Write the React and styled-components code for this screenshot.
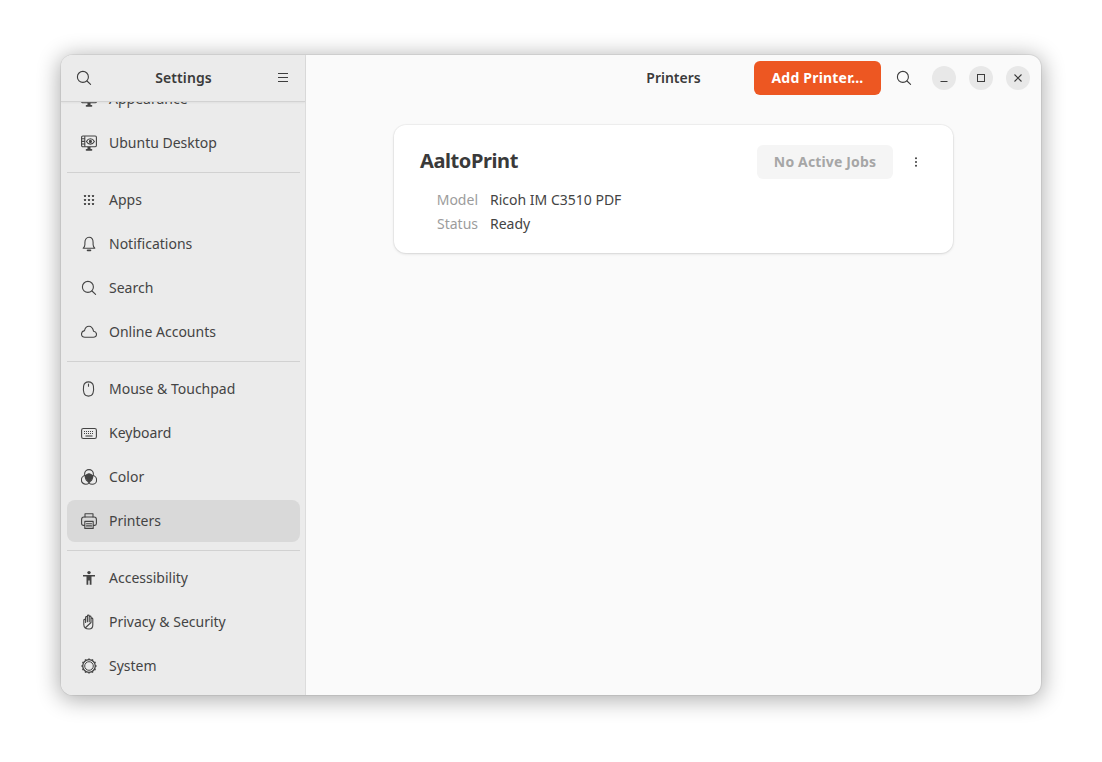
import React from "react";
import styled, { createGlobalStyle } from "styled-components";

const Global = createGlobalStyle`
  html, body { margin: 0; padding: 0; background: #fff; }
  body { font-family: "Noto Sans", "Open Sans", sans-serif; color: #3d3d3d; }
`;

const Page = styled.div`
  width: 1102px;
  height: 762px;
  padding: 55px 61px 67px;
  box-sizing: border-box;
  overflow: hidden;
`;
const Win = styled.div`
  width: 980px;
  height: 640px;
  display: flex;
  border-radius: 12px;
  overflow: hidden;
  background: #fafafa;
  box-shadow: 0 0 0 1px rgba(0,0,0,.06), 0 3px 22px 2px rgba(0,0,0,.32);
`;
const Sidebar = styled.aside`
  width: 244px;
  flex: none;
  display: flex;
  flex-direction: column;
  background: #ebebeb;
  border-right: 1px solid #dcdcdc;
`;
const SideHeader = styled.header`
  height: 46px;
  flex: none;
  display: flex;
  align-items: center;
  justify-content: space-between;
  padding: 0 14px 0 15px;
  background: #ebebeb;
  border-bottom: 1px solid #d2d2d2;
  box-shadow: 0 1px 2px rgba(0,0,0,.05);
  position: relative;
  z-index: 1;
`;
const SideTitle = styled.h1`
  margin: 0;
  padding-bottom: 2px;
  font-size: 14px;
  font-weight: 600;
  letter-spacing: 0.1px;
  color: #3a3a3a;
`;
const Scroll = styled.nav`
  flex: 1;
  overflow: hidden;
  padding: 0 5px 0 6px;
`;
const Clip = styled.div`
  margin-top: -24px;
  display: flex;
  flex-direction: column;
  gap: 2px;
`;
const Row = styled.a`
  height: 42px;
  flex: none;
  display: flex;
  align-items: center;
  gap: 12px;
  padding-left: 14px;
  border-radius: 8px;
  font-size: 14px;
  color: #444;
  background: ${(p) => (p.$active ? "#d9d9d9" : "transparent")};
  svg { flex: none; }
`;
const RowLabel = styled.span`
  padding-bottom: 2px;
`;
const Sep = styled.hr`
  border: 0;
  height: 1px;
  background: #d1d1d1;
  margin: 6px 0 4px;
`;
const Main = styled.main`
  flex: 1;
  min-width: 0;
  display: flex;
  flex-direction: column;
`;
const MainHeader = styled.header`
  height: 46px;
  flex: none;
  display: grid;
  grid-template-columns: 1fr auto 1fr;
  align-items: center;
  padding: 0 11px;
`;
const MainTitle = styled.h2`
  grid-column: 2;
  margin: 0;
  padding-bottom: 2px;
  font-size: 14px;
  font-weight: 600;
  color: #3a3a3a;
`;
const HeaderEnd = styled.div`
  grid-column: 3;
  display: flex;
  align-items: center;
  justify-content: flex-end;
`;
const AddButton = styled.button`
  width: 127px;
  height: 34px;
  border: 0;
  border-radius: 6px;
  background: #ed5722;
  color: #fff;
  font: 700 14px "Noto Sans", sans-serif;
  letter-spacing: 0.2px;
  padding: 0 0 2px;
  margin-right: 14px;
`;
const SearchSlot = styled.span`
  display: flex;
  width: 18px;
  justify-content: center;
  margin-right: 19px;
`;
const WinButton = styled.button`
  width: 24px;
  height: 24px;
  padding: 0;
  border: 0;
  border-radius: 50%;
  background: #e8e8e8;
  color: #3d3d3d;
  display: flex;
  align-items: center;
  justify-content: center;
  margin-left: ${(p) => (p.$first ? 0 : 13)}px;
`;
const Content = styled.div`
  flex: 1;
  padding-top: 24px;
  display: flex;
  justify-content: center;
  align-items: flex-start;
`;
const Card = styled.section`
  width: 559px;
  height: 128px;
  box-sizing: border-box;
  background: #fff;
  border-radius: 12px;
  box-shadow: 0 0 0 1px rgba(0,0,0,.035), 0 1px 3px rgba(0,0,0,.12);
  padding: 20px 26px 0;
`;
const CardTop = styled.div`
  display: flex;
  align-items: center;
  height: 34px;
`;
const PrinterName = styled.h3`
  flex: 1;
  margin: 0;
  padding-bottom: 4px;
  font-size: 20px;
  font-weight: 700;
  letter-spacing: -0.4px;
  color: #3a3a3a;
`;
const JobsButton = styled.button`
  width: 136px;
  height: 34px;
  border: 0;
  border-radius: 6px;
  background: #f5f5f5;
  color: #a6a6a6;
  font: 700 14px "Noto Sans", sans-serif;
  letter-spacing: 0.15px;
  padding: 0 0 2px;
  margin-right: 15px;
`;
const Kebab = styled.span`
  display: flex;
  width: 16px;
  justify-content: center;
  margin-right: 3px;
`;
const Details = styled.dl`
  margin: 9px 0 0;
  display: grid;
  grid-template-columns: 58px auto;
  column-gap: 12px;
  font-size: 14px;
  line-height: 24px;
  dt { color: #9c9c9c; text-align: right; }
  dd { margin: 0; color: #444; }
`;

const I = ({ children, size = 16, sw = 1.1 }) => (
  <svg width={size} height={size} viewBox="0 0 16 16" fill="none" stroke="currentColor" strokeWidth={sw} strokeLinecap="round" strokeLinejoin="round">
    {children}
  </svg>
);
const SearchIcon = () => (
  <I><circle cx="6.900" cy="6.900" r="5.500" /><path d="M11 11l3.600 3.400" /></I>
);
const Monitor = () => (
  <I><rect x="0.600" y="1" width="14.800" height="10.800" rx="1.200" /><path d="M5.500 14.900h5" strokeWidth="1.600" /><path d="M7 12v2.500h2v-2.500" fill="currentColor" /></I>
);
const Desktop = () => (
  <I>
    <rect x="0.600" y="1" width="14.800" height="10.800" rx="1.200" />
    <path d="M3.800 1.500v9.800M1 3.800h2.800M1 6.400h2.800M1 9h2.800" />
    <path d="M5.400 6.400c1-1.800 2.400-2.700 4-2.700s3 .9 4 2.700c-1 1.800-2.400 2.700-4 2.700s-3-.9-4-2.700z" />
    <circle cx="9.400" cy="6.400" r="1" fill="currentColor" />
    <path d="M5.500 14.900h5" strokeWidth="1.600" /><path d="M7 12v2.500h2v-2.500" fill="currentColor" />
  </I>
);
const Apps = () => (
  <svg width="16" height="16" viewBox="0 0 16 16" fill="currentColor">
    {[3, 7, 11].flatMap((y) => [3, 7, 11].map((x) => <rect key={x + "-" + y} x={x} y={y} width="2" height="2" rx="0.400" />))}
  </svg>
);
const Bell = () => (
  <I><path d="M2.200 12.200c1.200-1 1.700-2 1.700-3.700V6.400C3.900 3.400 5.600 1.300 8 1.300s4.100 2.100 4.100 5.100v2.100c0 1.700.5 2.700 1.700 3.700z" /><path d="M6.600 14.300h2.800" strokeWidth="1.800" /></I>
);
const Cloud = () => (
  <I><path d="M4 13.200h8.300c1.900 0 3.200-1.200 3.200-2.900 0-1.600-1.200-2.800-2.900-3C11.900 4.200 10.200 2.200 8 2.200c-2.300 0-4 1.900-4.500 4.400C1.600 7 .5 8.400.5 10c0 1.800 1.500 3.200 3.500 3.200z" /></I>
);
const Mouse = () => (
  <I><path d="M7.500 .9c3 0 4.400 1.500 4.900 4.100.4 2.600.3 5-.4 7.200-.6 1.800-2.200 2.900-4.500 2.900s-3.900-1.100-4.500-2.900c-.7-2.200-.8-4.600-.4-7.200C3.100 2.400 4.500.9 7.500.9z" /><path d="M7.500 3v2.200" /></I>
);
const Keyboard = () => (
  <svg width="16" height="16" viewBox="0 0 16 16" fill="none" stroke="currentColor" strokeWidth="1.100">
    <rect x="0.600" y="3.500" width="14.800" height="10" rx="1.800" />
    <path d="M3 6.500h10M3 8.500h10" strokeDasharray="1 1" />
    <path d="M4.500 11h7" />
  </svg>
);
const Color = () => (
  <svg width="16" height="16" viewBox="0 0 16 16" fill="none" stroke="currentColor" strokeWidth="1.100">
    <path d="M8 4.800C6.300 5 4.600 6.200 4.300 8.300c.5 2 2 4.200 3.700 4.200s3.200-2.200 3.700-4.200C11.400 6.200 9.700 5 8 4.800z" fill="currentColor" />
    <circle cx="8" cy="5" r="4.400" />
    <circle cx="4.800" cy="10.900" r="4.400" />
    <circle cx="11.200" cy="10.900" r="4.400" />
  </svg>
);
const Printer = () => (
  <I>
    <path d="M4 4V.7h8V4" />
    <path d="M3.600 12.400H2.400C1.300 12.400.6 11.700.6 10.600V6.400C.6 5 1.500 4 2.900 4h10.200c1.400 0 2.300 1 2.300 2.400v4.200c0 1.100-.7 1.800-1.800 1.800h-1.200" />
    <rect x="3.800" y="8.400" width="8.400" height="7" />
    <path d="M5.500 10.700h5M5.500 12.900h5" />
  </I>
);
const Person = () => (
  <svg width="16" height="16" viewBox="0 0 16 16" fill="currentColor">
    <circle cx="8" cy="2.600" r="1.700" />
    <path d="M2 5h12v1.500h-3.500V14.800H8.700v-4.300H7.300v4.300H5.500V6.500H2z" />
  </svg>
);
const Hand = () => (
  <I><path d="M4.200 14C3.300 13 2.800 11.800 2.800 10.400V6.300a.9.900 0 0 1 1.800 0V8.500M4.600 8.500V3.400a.9.900 0 0 1 1.800 0V7.800M6.400 7.800V2a.9.900 0 0 1 1.800 0v5.800M8.200 7.800V3a.9.900 0 0 1 1.800 0v4.800M10 8.500V5a.9.900 0 0 1 1.800 0v6c0 2.700-1.500 4-3.700 4-1.500 0-2.900-.2-3.900-1z" /></I>
);
const Gear = () => {
  const teeth = Array.from({ length: 12 }, (_, i) => (i * 360) / 12);
  return (
    <svg width="16" height="16" viewBox="0 0 16 16" fill="none" stroke="currentColor">
      <circle cx="8" cy="8" r="6.300" strokeWidth="1.300" />
      <circle cx="8" cy="8" r="4.300" strokeWidth="1" />
      {teeth.map((a) => <path key={a} d="M8 .4v1.400" strokeWidth="1.500" transform={`rotate(${a} 8 8)`} />)}
    </svg>
  );
};
const Hamburger = () => (
  <svg width="16" height="16" viewBox="0 0 16 16" stroke="currentColor" strokeWidth="1"><path d="M3 3.500h10M3 7.500h10M3 11.500h10" /></svg>
);

const group1 = [["Appearance", Monitor], ["Ubuntu Desktop", Desktop]];
const group2 = [["Apps", Apps], ["Notifications", Bell], ["Search", SearchIcon], ["Online Accounts", Cloud]];
const group3 = [["Mouse & Touchpad", Mouse], ["Keyboard", Keyboard], ["Color", Color], ["Printers", Printer]];
const group4 = [["Accessibility", Person], ["Privacy & Security", Hand], ["System", Gear]];

const renderRows = (rows) =>
  rows.map(([label, Icon]) => (
    <Row key={label} $active={label === "Printers"}>
      <Icon />
      <RowLabel>{label}</RowLabel>
    </Row>
  ));

export default function App() {
  return (
    <Page>
      <Global />
      <Win>
        <Sidebar>
          <SideHeader>
            <SearchIcon />
            <SideTitle>Settings</SideTitle>
            <Hamburger />
          </SideHeader>
          <Scroll>
            <Clip>
              {renderRows(group1)}
              <Sep />
              {renderRows(group2)}
              <Sep />
              {renderRows(group3)}
              <Sep />
              {renderRows(group4)}
            </Clip>
          </Scroll>
        </Sidebar>
        <Main>
          <MainHeader>
            <MainTitle>Printers</MainTitle>
            <HeaderEnd>
              <AddButton>Add Printer…</AddButton>
              <SearchSlot><SearchIcon /></SearchSlot>
              <WinButton $first>
                <svg width="16" height="16" viewBox="0 0 16 16" stroke="currentColor" strokeWidth="1"><path d="M4.500 11.500h7" /></svg>
              </WinButton>
              <WinButton>
                <svg width="16" height="16" viewBox="0 0 16 16" fill="none" stroke="currentColor" strokeWidth="1"><rect x="4.500" y="4.500" width="7" height="7" /></svg>
              </WinButton>
              <WinButton>
                <svg width="16" height="16" viewBox="0 0 16 16" stroke="currentColor" strokeWidth="1.100"><path d="M4.500 4.500l7 7M11.500 4.500l-7 7" /></svg>
              </WinButton>
            </HeaderEnd>
          </MainHeader>
          <Content>
            <Card>
              <CardTop>
                <PrinterName>AaltoPrint</PrinterName>
                <JobsButton>No Active Jobs</JobsButton>
                <Kebab>
                  <svg width="16" height="16" viewBox="0 0 16 16" fill="currentColor"><circle cx="8" cy="4.200" r="1" /><circle cx="8" cy="8" r="1" /><circle cx="8" cy="11.800" r="1" /></svg>
                </Kebab>
              </CardTop>
              <Details>
                <dt>Model</dt><dd>Ricoh IM C3510 PDF</dd>
                <dt>Status</dt><dd>Ready</dd>
              </Details>
            </Card>
          </Content>
        </Main>
      </Win>
    </Page>
  );
}
